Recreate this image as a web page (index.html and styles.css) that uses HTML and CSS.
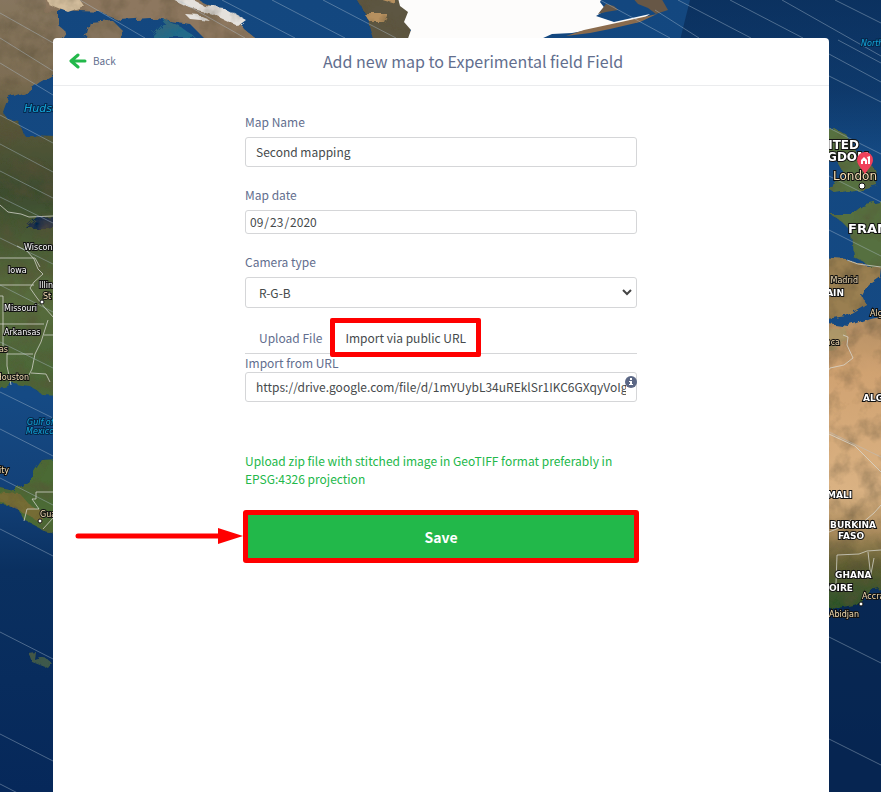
FILE: index.html
```html
<!DOCTYPE html>
<html lang="en">
<head>
    <meta charset="UTF-8">
    <meta name="viewport" content="width=device-width, initial-scale=1.0">
    <title>Add new map</title>
    <link rel="stylesheet" href="styles.css">
</head>
<body>
    <!-- Satellite map behind the dialog -->
    <svg class="map" viewBox="0 0 881 792" preserveAspectRatio="xMidYMin slice" aria-hidden="true">
        <defs>
            <linearGradient id="sea" x1="0" y1="0" x2="0" y2="1">
                <stop offset="0" stop-color="#13477f"/>
                <stop offset="0.5" stop-color="#154a84"/>
                <stop offset="0.62" stop-color="#134178"/>
                <stop offset="0.72" stop-color="#0a3060"/>
                <stop offset="1" stop-color="#06285a"/>
            </linearGradient>
            <linearGradient id="deep" x1="0" y1="0" x2="0" y2="1">
                <stop offset="0" stop-color="#06234b" stop-opacity="0.6"/>
                <stop offset="0.6" stop-color="#06234b" stop-opacity="0.4"/>
                <stop offset="1" stop-color="#06234b" stop-opacity="0"/>
            </linearGradient>
            <linearGradient id="america" x1="0" y1="0" x2="0" y2="1">
                <stop offset="0" stop-color="#87765f"/>
                <stop offset="0.22" stop-color="#7d6d53"/>
                <stop offset="0.32" stop-color="#59573a"/>
                <stop offset="0.5" stop-color="#3d4d2f"/>
                <stop offset="0.75" stop-color="#576b3c"/>
                <stop offset="1" stop-color="#4a6638"/>
            </linearGradient>
            <linearGradient id="africa" x1="0" y1="0" x2="0" y2="1">
                <stop offset="0" stop-color="#b08c62"/>
                <stop offset="0.2" stop-color="#d0a271"/>
                <stop offset="0.6" stop-color="#dab283"/>
                <stop offset="0.74" stop-color="#a98a5c"/>
                <stop offset="0.86" stop-color="#5c5c30"/>
                <stop offset="1" stop-color="#2a532b"/>
            </linearGradient>
            <filter id="rough" x="-5%" y="-5%" width="110%" height="110%">
                <feTurbulence type="fractalNoise" baseFrequency="0.09" numOctaves="3" seed="4" result="n"/>
                <feDisplacementMap in="SourceGraphic" in2="n" scale="8" result="d"/>
                <feTurbulence type="fractalNoise" baseFrequency="0.05" numOctaves="4" seed="9"/>
                <feColorMatrix type="matrix" values="0 0 0 0 0.1  0 0 0 0 0.08  0 0 0 0 0.04  1.2 0 0 0 -0.5" result="shade"/>
                <feComposite in="shade" in2="d" operator="in" result="s"/>
                <feMerge><feMergeNode in="d"/><feMergeNode in="s"/></feMerge>
            </filter>
        </defs>
        <rect width="881" height="792" fill="url(#sea)"/>
        <path fill="#06234b" d="M820 600h61v192h-61z" opacity=".6"/>
        <path fill="url(#deep)" d="M690 0h191v150h-60V40H680z"/>
        <g filter="url(#rough)">
            <path fill="url(#america)" d="M-10-10H58V72L40 82 28 91 8 98 3 112 7 119 19 121 24 135 58 136V395L42 394 30 386 14 384-10 391z"/>
            <path fill="#8d775e" d="M44-10H185L205 4 235 16 243 28 262 44H210L190 24 150 18 120 20 100 12 60 10 44 12z"/>
            <path fill="#85735c" d="M44 30L58 25 66 32 58 44H44zM84 44L90 22 112 20 124 32 116 44z"/>
            <path fill="#d3bd9c" d="M44-6H76L84 6 68 12 48 4z"/>
            <path fill="#2c8491" d="M154 34L166 20 180 26 196 38H150z" opacity=".6"/>
            <path fill="#e5e1dc" d="M165-4L185-4 204 6 224 8 246 20 238 26 212 14 190 8zM184 13L200 14 210 21 190 19z"/>
            <path fill="#5d5743" d="M352-8H402L414 20 408 44H376L368 18z"/>
            <path fill="#b6905f" d="M364 14L388 14 384 22 370 22zM362-6L396-6 396 4z"/>
            <path fill="#0c294c" d="M26 228L38 218 58 217V226L44 228z"/>
            <path fill="#4b6a35" d="M-8 486L14 491 29 481 35 470 42 460 58 459V534L43 530 25 521 18 508-8 503z"/>
            <path fill="#886d35" d="M-6 492L20 494 30 505 48 514 40 522 18 510-6 499z" opacity=".7"/>
            <path fill="#5b7044" d="M29 654L37 653 36 661 45 658 52 663 48 668 32 662z" opacity=".65"/>
            <path fill="#577041" d="M822 134L834 128 848 136 856 152 874 168 878 186 862 190 836 194 828 188 846 176 838 162 822 152z"/>
            <path fill="#566f40" d="M888 200L862 206 852 214 830 214 842 222 852 232 854 258 874 268 890 270z"/>
            <path fill="#9a7f51" d="M820 258L848 260 860 265 881 267 880 276 868 284 862 296 866 304 846 316 820 320z"/>
            <path fill="url(#africa)" d="M820 322L848 326 870 318 890 314V586L870 590 858 604 838 608 820 606z"/>
            <path fill="#9b9b68" d="M822 330L845 326 846 340 836 350 822 352z" opacity=".45"/>
        </g>
        <!-- Ice sheet -->
        <path fill="#fdfcfb" d="M396-10H606L600 2 606 10 596 16 614 22 650 14 638 22 600 28 572 33 552 34 530 44H406L411 30 404 22 408 12 400 6z"/>
        <path fill="#675746" d="M606 4L614 6 618 10 606 12 598 14 602 9zM630-5L660-4 668 10 656 14 648 8 638 4z"/>
        <path fill="#8a6b4d" d="M657 14L640 22 610 29 590 33 566 36 584 30 621 22z"/>
        <path class="border" d="M0 205l8 7 13 2 8 3 24-1M0 258h35l5 9M17 246l10 5 7 8 4 10 5 5-9 8-4 6 7 10 8 10 9 10 5 6M0 285h34M0 324h44M0 296h3v50M44 335h9M7 354h26M7 346v20l4 19M48 320l-7 22-6 12-3 15-3 6M31 373l15 1 4 8M53 492H36v7h-4l7 10H27l-3 12M53 518l-10 11"/>
        <path class="border" d="M847 260l11 4 23 3M843 335l5 2-1 8 6 13-9 7-14 3-7 11M829 434l26 12 26 26M829 532l10-4 12-8 10 4 13-11 7-8M837 555l22-1 8-3 14-1M837 555l-1 29M868 552l3 26M874 558l-4 21"/>
        <path class="track" d="M0 13l80 45M0 38l53 33M0 63l53 32M80 0l65 38M178 0l67 38M222 0l73 38M272 0l73 38M323 0l73 38M600 0l70 38M655 10l44 28M678 0l73 38M730 0l73 38M782 0l99 56M835 0l46 23M829 54l52 28M838 40l43 23M829 76l52 26M0 115l53 28M0 144l53 28M0 171l53 27M0 197l53 26M0 238l53 26M0 285l53 27M0 342l53 26M0 392l53 26M0 429l53 27M0 478l53 27M0 529l53 27M0 632l53 27M0 734l53 27M0 784l53 27M829 128l52 26M829 176l52 26M829 230l52 26M829 432l52 25M829 637l52 26M829 739l52 26"/>
        <g class="place water">
            <text x="24" y="112" font-size="11">Hudson Bay</text>
            <text x="861" y="46" font-size="8">North Sea</text>
            <text x="27" y="425" font-size="8">Gulf of</text>
            <text x="26" y="434" font-size="8">Mexico</text>
        </g>
        <g class="place state">
            <text x="24" y="250">Wisconsin</text>
            <text x="8" y="273">Iowa</text>
            <text x="39" y="288">Illinois</text>
            <text x="4" y="311">Missouri</text>
            <text x="4" y="335">Arkansas</text>
        </g>
        <g class="place city">
            <text x="43" y="299">St Louis</text>
            <text x="8" y="352" text-anchor="end">Dallas</text>
            <text x="29" y="380" text-anchor="end">Houston</text>
            <text x="9" y="473" text-anchor="end">Mexico City</text>
            <text x="40" y="517">Guatemala</text>
            <text x="833" y="180" font-size="12">London</text>
            <text x="858" y="283" text-anchor="end">Madrid</text>
            <text x="870" y="316">Algiers</text>
            <text x="840" y="345" text-anchor="end">Casablanca</text>
            <text x="862" y="599">Accra</text>
            <text x="859" y="617" text-anchor="end">Abidjan</text>
        </g>
        <g class="place country">
            <text x="859" y="149" font-size="12" text-anchor="end">UNITED</text>
            <text x="869" y="161" font-size="12" text-anchor="end">KINGDOM</text>
            <text x="848" y="233" font-size="13">FRANCE</text>
            <text x="844" y="296" text-anchor="end">SPAIN</text>
            <text x="863" y="401">ALGERIA</text>
            <text x="852" y="498" text-anchor="end">MALI</text>
            <text x="876" y="528" text-anchor="end">BURKINA</text>
            <text x="838" y="539">FASO</text>
            <text x="835" y="578">GHANA</text>
            <text x="853" y="591" text-anchor="end">CÔTE D'IVOIRE</text>
        </g>
        <g fill="#fff" stroke="#111">
            <circle cx="42" cy="302" r="2"/>
            <circle cx="40" cy="521" r="2"/>
            <circle cx="862" cy="186" r="3"/>
            <circle cx="861" cy="604" r="2"/>
        </g>
        <!-- Farm marker -->
        <path fill="#f0405a" d="M865 174c-3-5-8-9-8-14a8 8 0 0 1 16 0c0 5-5 9-8 14z"/>
        <path fill="#fff" d="M861 164v-4l3-3 3 3v4h-2v-3h-2v3zM867 157l3-1v8h-2v-5z"/>
    </svg>

    <main class="dialog">
        <header class="dialog-header">
            <a class="back" href="#">
                <svg width="18" height="16" viewBox="0 0 18 16" aria-hidden="true">
                    <path d="M9 2L2 8l7 6M3 8h13" fill="none" stroke="#22b84a" stroke-width="3" stroke-linecap="round" stroke-linejoin="round"/>
                </svg>
                Back
            </a>
            <h1>Add new map to Experimental field Field</h1>
        </header>

        <form class="map-form">
            <div class="field">
                <label for="map-name">Map Name</label>
                <input type="text" id="map-name" value="Second mapping">
            </div>
            <div class="field">
                <label for="map-date">Map date</label>
                <input type="date" id="map-date" value="2020-09-23">
            </div>
            <div class="field">
                <label for="camera">Camera type</label>
                <div class="select-wrap">
                    <select id="camera">
                        <option>R-G-B</option>
                    </select>
                    <svg class="chevron" width="10" height="7" viewBox="0 0 10 7" aria-hidden="true">
                        <path d="M1 1l4 4 4-4" fill="none" stroke="#444" stroke-width="2"/>
                    </svg>
                </div>
            </div>

            <div class="tabs">
                <button type="button" class="tab">Upload File</button>
                <button type="button" class="tab active">Import via public URL</button>
            </div>

            <div class="url-field">
                <label for="url">Import from URL</label>
                <div class="url-wrap">
                    <input type="text" id="url" value="https://drive.google.com/file/d/1mYUybL34uREklSr1IKC6GXqyVoIgjODx/view">
                    <svg class="info" width="12" height="12" viewBox="0 0 12 12" aria-hidden="true">
                        <circle cx="6" cy="6" r="6" fill="#5b6785"/>
                        <path d="M5 2h2v2H5zM4 5h3v3h1v1H4V8h1V6H4z" fill="#fff"/>
                    </svg>
                </div>
            </div>

            <p class="hint">Upload zip file with stitched image in GeoTIFF format preferably in EPSG:4326 projection</p>

            <div class="save-row">
                <button type="submit" class="save">Save</button>
                <svg class="arrow" width="168" height="16" viewBox="0 0 168 16" aria-hidden="true">
                    <path d="M3 8h142" stroke="#f00" stroke-width="5" stroke-linecap="round"/>
                    <path d="M143 0l25 8-25 8z" fill="#f00"/>
                </svg>
            </div>
        </form>
    </main>
</body>
</html>
```
FILE: styles.css
```css
:root {
    --green: #22b84a;
    --slate: #626e8e;
    --text: #464a4c;
    --line: #d5d6d8;
    --mark: #ff0000;
}

* {
    margin: 0;
    padding: 0;
    box-sizing: border-box;
}

body {
    font-family: "Noto Sans CJK SC", "Noto Sans", sans-serif;
    font-size: 12px;
    line-height: 18px;
    color: var(--slate);
    background-color: #0a3060;
}

input,
select,
button {
    font: inherit;
}

/* Map */
.map {
    position: fixed;
    top: 0;
    left: 0;
    width: 100%;
    height: 100%;
}

.border {
    fill: none;
    stroke: #d8d8d0;
    opacity: 0.75;
}

.track {
    fill: none;
    stroke: #b5c5d5;
    opacity: 0.4;
}

.place {
    font-family: "DejaVu Sans", sans-serif;
    font-size: 8px;
    fill: #fff;
    stroke: #111;
    stroke-width: 2px;
    paint-order: stroke;
}

.city {
    fill: #f5dfb5;
}

.country {
    font-size: 9px;
    font-weight: bold;
}

.water {
    font-style: italic;
    fill: #12a5d8;
    stroke: #06284c;
}

/* Dialog */
.dialog {
    position: relative;
    margin: 38px 52px 0 53px;
    min-height: calc(100vh - 38px);
    background: #fff;
    border-radius: 4px 4px 0 0;
}

.dialog-header {
    display: grid;
    grid-template-columns: 80px 1fr 16px;
    align-items: center;
    height: 48px;
    padding-bottom: 1px;
    border-bottom: 1px solid #ebecee;
}

.back {
    display: flex;
    align-items: center;
    gap: 6px;
    padding-left: 16px;
    font-size: 10px;
    color: var(--slate);
    text-decoration: none;
}

.dialog-header h1 {
    font-size: 16px;
    line-height: 24px;
    font-weight: normal;
    text-align: center;
}

.map-form {
    max-width: 392px;
    margin: 0 auto;
    padding-top: 27px;
}

.field {
    margin-bottom: 19px;
}

label {
    display: block;
}

.field label {
    margin-bottom: 6px;
}

input,
select {
    display: block;
    width: 100%;
    height: 30px;
    padding: 0 10px 2px;
    color: var(--text);
    background: #fff;
    border: 1px solid var(--line);
    border-radius: 3px;
}

input[type="date"] {
    height: 24px;
    padding: 0 3px;
}

input[type="date"]::-webkit-calendar-picker-indicator {
    display: none;
}

.select-wrap,
.url-wrap,
.save-row {
    position: relative;
}

select {
    height: 31px;
    padding: 0 13px;
    appearance: none;
}

.chevron {
    position: absolute;
    top: 12px;
    right: 5px;
}

.tabs {
    display: flex;
    align-items: flex-start;
    height: 36px;
    margin-top: -9px;
    border-bottom: 1px solid var(--line);
}

.tab {
    height: 39px;
    padding: 0 8px 0 14px;
    color: var(--slate);
    background: none;
    border: 0;
}

.tab.active {
    padding: 0 10px;
    color: var(--text);
    background: #fff;
    border: 5px solid var(--mark);
    border-radius: 2px;
}

.info {
    position: absolute;
    top: 4px;
    right: 0;
}

.hint {
    margin-top: 50px;
    color: var(--green);
}

.save-row {
    margin: 22px -2px 0;
}

.save {
    display: block;
    width: 100%;
    height: 53px;
    font-size: 14px;
    font-weight: bold;
    color: #fff;
    background: var(--green);
    border: 5px solid var(--mark);
    border-radius: 3px;
}

/* Arrow pointing at the save button */
.arrow {
    position: absolute;
    top: 18px;
    right: 100%;
}
```
